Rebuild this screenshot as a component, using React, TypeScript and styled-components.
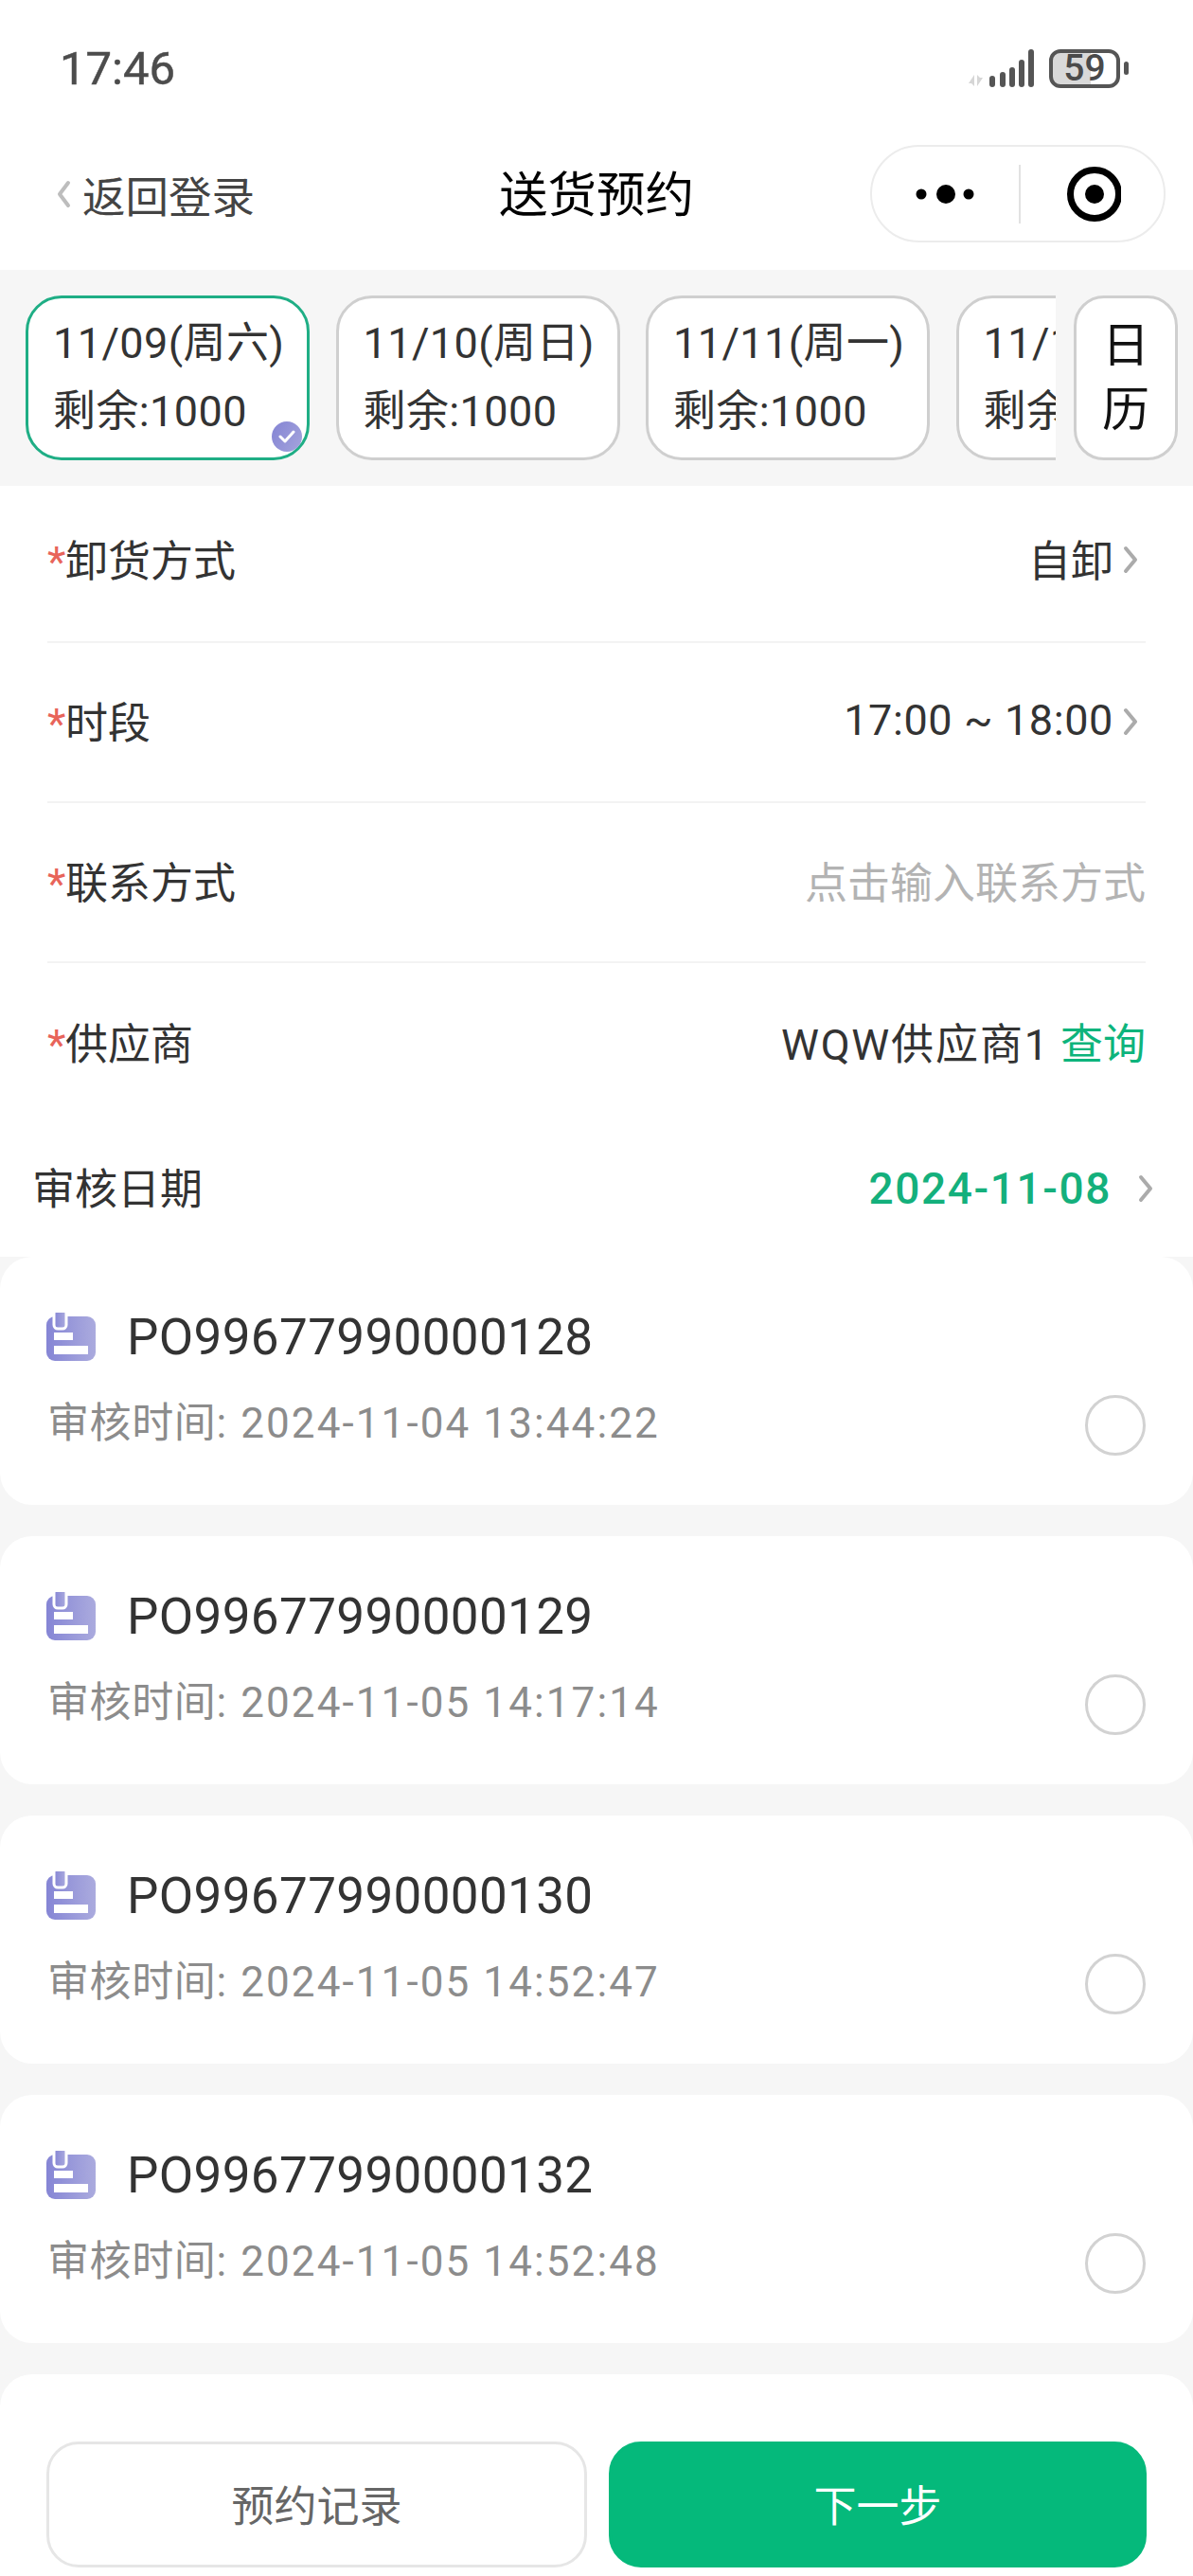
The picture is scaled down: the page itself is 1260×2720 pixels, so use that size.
import React from "react";
import styled, { createGlobalStyle } from "styled-components";

const Global = createGlobalStyle`
  html, body { margin: 0; padding: 0; background: #fff; }
  * { box-sizing: border-box; }
  body { font-family: Roboto, "Noto Sans CJK SC", sans-serif; }
`;

const Page = styled.div`
  position: relative;
  width: 1260px;
  height: 2720px;
  overflow: hidden;
  background: #f6f6f6;
  color: #333;
`;

const Header = styled.header`
  background: #fff;
  height: 285px;
  display: flex;
  flex-direction: column;
`;

const StatusBar = styled.div`
  height: 148px;
  padding: 46px 68px 0 63px;
  display: flex;
  justify-content: space-between;
  align-items: flex-start;
`;

const Clock = styled.span`
  font-size: 49px;
  line-height: 54px;
  font-weight: 400;
  color: #4c4c4c;
  -webkit-text-stroke: 0.5px #4c4c4c;
`;

const StatusIcons = styled.div`
  display: flex;
  align-items: flex-end;
  height: 46px;
  gap: 16px;
  margin-right: 9px;
`;

const Battery = styled.div`
  position: relative;
  width: 75px;
  height: 41px;
  border: 4px solid #555;
  border-radius: 12px;
  margin-bottom: -1px;
  background: linear-gradient(90deg, #d9d9d9 59%, #fff 59%);
  display: flex;
  align-items: center;
  justify-content: center;
  font-size: 39px;
  font-weight: 500;
  color: #4a4a4a;
  line-height: 33px;
  &::after {
    content: "";
    position: absolute;
    right: -13px;
    top: 9px;
    width: 5px;
    height: 14px;
    border-radius: 3px;
    background: #555;
  }
`;

const NavBar = styled.nav`
  position: relative;
  height: 137px;
  padding: 5px 29px 0 59px;
  display: flex;
  align-items: flex-start;
  justify-content: space-between;
`;

const BackLink = styled.div`
  display: flex;
  align-items: center;
  gap: 12px;
  height: 103px;
  font-size: 45.5px;
  color: #444;
`;

const NavTitle = styled.div`
  position: absolute;
  left: 0;
  right: 0;
  top: 7px;
  height: 103px;
  line-height: 103px;
  text-align: center;
  font-size: 51.5px;
  color: #000;
`;

const Capsule = styled.div`
  width: 312px;
  height: 103px;
  border: 2px solid #ececec;
  border-radius: 52px;
  background: #fff;
  display: grid;
  grid-template-columns: 155px 2px 1fr;
  align-items: center;
  justify-items: center;
  position: relative;
  z-index: 1;
`;

const CapsuleDivider = styled.span`
  width: 2px;
  height: 62px;
  background: #e2e2e2;
`;

const DateStrip = styled.section`
  height: 228px;
  padding: 27px 16px 0 27px;
  display: flex;
  align-items: flex-start;
  gap: 19px;
`;

const DateScroller = styled.div`
  flex: 1;
  display: flex;
  gap: 27.5px;
  overflow: hidden;
`;

const DateChip = styled.div<{ $active?: boolean }>`
  position: relative;
  flex: 0 0 300px;
  height: 174px;
  padding: 12px 0 0 26px;
  border: 3px solid ${(p) => (p.$active ? "#1fae85" : "#cfcfcf")};
  border-radius: 38px;
  background: #fff;
  font-size: 45px;
  line-height: 72px;
  letter-spacing: 0.4px;
  color: #333;
  white-space: nowrap;
`;

const CheckBadge = styled.span`
  position: absolute;
  right: 5px;
  bottom: 6px;
  width: 32px;
  height: 32px;
  display: flex;
  align-items: center;
  justify-content: center;
  border-radius: 50%;
  background: linear-gradient(120deg, #8484d4, #a4a4dc);
`;

const CalendarChip = styled.div`
  flex: 0 0 110px;
  height: 174px;
  border: 3px solid #cfcfcf;
  border-radius: 32px;
  background: #fff;
  display: flex;
  flex-direction: column;
  align-items: center;
  justify-content: center;
  font-size: 50px;
  line-height: 68px;
  color: #111;
`;

const Form = styled.section`
  background: #fff;
  padding: 0 50px;
`;

const FormRow = styled.div<{ $last?: boolean }>`
  height: 169px;
  padding-bottom: 5px;
  display: flex;
  align-items: center;
  justify-content: space-between;
  border-bottom: ${(p) => (p.$last ? "none" : "2px solid #f3f3f3")};
  font-size: 45px;
  &:first-child {
    height: 166px;
    padding-bottom: 12px;
  }
`;

const Label = styled.span`
  color: #333;
  display: flex;
  align-items: baseline;
`;

const Star = styled.span`
  color: #e8645a;
  width: 19px;
`;

const Value = styled.span<{ $spaced?: boolean }>`
  display: flex;
  align-items: center;
  color: #333;
  gap: 10px;
  margin-right: 8px;
  letter-spacing: ${(p) => (p.$spaced ? "0.6px" : "0")};
  svg {
    margin-top: 4px;
  }
`;

const Supplier = styled.span`
  color: #333;
  letter-spacing: 1.9px;
`;

const Placeholder = styled.span`
  color: #b3b3b3;
`;

const Link = styled.span`
  color: #0db47c;
  margin-left: 11px;
  letter-spacing: 0;
`;

const ReviewRow = styled.div`
  height: 141px;
  background: #fff;
  padding: 0 42px 8px 34px;
  display: flex;
  align-items: center;
  justify-content: space-between;
  font-size: 45px;
  color: #333;
`;

const ReviewDate = styled.span`
  display: flex;
  align-items: center;
  gap: 28px;
  margin-top: 4px;
  color: #14b07c;
  font-weight: 500;
  font-size: 46px;
  letter-spacing: 1.6px;
`;

const OrderList = styled.section`
  display: flex;
  flex-direction: column;
  gap: 33px;
`;

const OrderCard = styled.article`
  flex: 0 0 262px;
  height: 262px;
  background: #fff;
  border-radius: 34px;
  padding: 60px 50px 0 49px;
  display: grid;
  grid-template-columns: 1fr 64px;
  align-items: start;
`;

const OrderInfo = styled.div`
  display: flex;
  flex-direction: column;
`;

const OrderTitle = styled.div`
  display: flex;
  align-items: center;
  gap: 33px;
  height: 52px;
  margin-top: -1px;
  font-size: 53px;
  line-height: 52px;
  letter-spacing: 0.35px;
  color: #333;
`;

const OrderTime = styled.div`
  margin-top: 37px;
  padding-left: 1px;
  font-size: 44px;
  line-height: 56px;
  color: #8c8c8c;
  letter-spacing: 0.6px;
`;

const OrderStamp = styled.span`
  margin-left: 3px;
  letter-spacing: 2.1px;
`;

const Radio = styled.span`
  width: 64px;
  height: 64px;
  margin-top: 86px;
  border-radius: 50%;
  border: 3px solid #d2d2d2;
`;

const Footer = styled.footer`
  position: absolute;
  left: 0;
  right: 0;
  bottom: 0;
  height: 170px;
  padding: 28px 49px 9px 49px;
  background: #fff;
  display: grid;
  grid-template-columns: 571px 568px;
  gap: 23px;
`;

const FooterButton = styled.div<{ $primary?: boolean }>`
  height: 133px;
  display: flex;
  align-items: center;
  justify-content: center;
  padding-bottom: 3px;
  border-radius: 34px;
  border: 3px solid ${(p) => (p.$primary ? "#05b97b" : "#e6e6e6")};
  background: ${(p) => (p.$primary ? "#05b97b" : "#fff")};
  color: ${(p) => (p.$primary ? "#fff" : "#666")};
  font-size: 45px;
`;

const Chevron = ({ left, color = "#ababab" }: { left?: boolean; color?: string }) => (
  <svg width="16" height="30" viewBox="0 0 16 30" fill="none">
    <path
      d={left ? "M13 3 L4 15 L13 27" : "M3 3 L13 15 L3 27"}
      stroke={color}
      strokeWidth="4"
      strokeLinecap="round"
      strokeLinejoin="round"
    />
  </svg>
);

const SignalIcon = () => (
  <svg width="70" height="40" viewBox="0 0 70 40">
    <path d="M7 39V27L1 36h3zM10 27V39l6-9h-3z" fill="#d6d6d6" />
    <rect x="23" y="28" width="6" height="12" rx="3" fill="#555" />
    <rect x="34" y="24" width="6" height="16" rx="3" fill="#555" />
    <rect x="44" y="19" width="6" height="21" rx="3" fill="#555" />
    <rect x="54" y="11" width="6" height="29" rx="3" fill="#555" />
    <rect x="64" y="0" width="6" height="40" rx="3" fill="#555" />
  </svg>
);

const DotsIcon = () => (
  <svg width="64" height="24" viewBox="0 0 64 24">
    <circle cx="6" cy="12" r="5.5" fill="#000" />
    <circle cx="32" cy="12" r="10" fill="#000" />
    <circle cx="56" cy="12" r="5.5" fill="#000" />
  </svg>
);

const TargetIcon = () => (
  <svg width="60" height="60" viewBox="0 0 60 60">
    <circle cx="32" cy="30" r="25.5" fill="none" stroke="#000" strokeWidth="7" />
    <circle cx="32" cy="30" r="10" fill="#000" />
  </svg>
);

const CheckIcon = () => (
  <svg width="18" height="14" viewBox="0 0 18 14" fill="none">
    <path d="M2 7 L7 12 L16 2" stroke="#fff" strokeWidth="3" strokeLinecap="round" strokeLinejoin="round" />
  </svg>
);

const DocIcon = ({ id }: { id: string }) => (
  <svg width="52" height="52" viewBox="0 0 52 52">
    <defs>
      <linearGradient id={id} x1="0" x2="1" y1="0" y2="0">
        <stop offset="0" stopColor="#8585d5" />
        <stop offset="1" stopColor="#ababde" />
      </linearGradient>
    </defs>
    <rect x="0" y="4" width="52" height="47" rx="9" fill={`url(#${id})`} />
    <rect x="8" y="-3" width="13" height="20" rx="4" fill={`url(#${id})`} stroke="#fff" strokeWidth="3" />
    <rect x="8" y="21" width="20" height="8" fill="#fff" />
    <rect x="8" y="35" width="36" height="9" fill="#fff" />
  </svg>
);

const dates = [
  { day: "11/09(周六)", left: "剩余:1000", active: true },
  { day: "11/10(周日)", left: "剩余:1000" },
  { day: "11/11(周一)", left: "剩余:1000" },
  { day: "11/12(周二)", left: "剩余:1000" },
];

const orders = [
  { no: "PO99677990000128", time: "2024-11-04 13:44:22" },
  { no: "PO99677990000129", time: "2024-11-05 14:17:14" },
  { no: "PO99677990000130", time: "2024-11-05 14:52:47" },
  { no: "PO99677990000132", time: "2024-11-05 14:52:48" },
];

export default function App() {
  return (
    <Page>
      <Global />
      <Header>
        <StatusBar>
          <Clock>17:46</Clock>
          <StatusIcons>
            <SignalIcon />
            <Battery>59</Battery>
          </StatusIcons>
        </StatusBar>
        <NavBar>
          <BackLink>
            <Chevron left color="#bdbdbd" />
            返回登录
          </BackLink>
          <NavTitle>送货预约</NavTitle>
          <Capsule>
            <DotsIcon />
            <CapsuleDivider />
            <TargetIcon />
          </Capsule>
        </NavBar>
      </Header>

      <DateStrip>
        <DateScroller>
          {dates.map((d) => (
            <DateChip key={d.day} $active={d.active}>
              {d.day}
              <br />
              {d.left}
              {d.active && (
                <CheckBadge>
                  <CheckIcon />
                </CheckBadge>
              )}
            </DateChip>
          ))}
        </DateScroller>
        <CalendarChip>
          <span>日</span>
          <span>历</span>
        </CalendarChip>
      </DateStrip>

      <Form>
        <FormRow>
          <Label><Star>*</Star>卸货方式</Label>
          <Value>自卸<Chevron /></Value>
        </FormRow>
        <FormRow>
          <Label><Star>*</Star>时段</Label>
          <Value $spaced>17:00 ~ 18:00<Chevron /></Value>
        </FormRow>
        <FormRow>
          <Label><Star>*</Star>联系方式</Label>
          <Placeholder>点击输入联系方式</Placeholder>
        </FormRow>
        <FormRow $last>
          <Label><Star>*</Star>供应商</Label>
          <Supplier>WQW供应商1<Link>查询</Link></Supplier>
        </FormRow>
      </Form>

      <ReviewRow>
        <span>审核日期</span>
        <ReviewDate>2024-11-08<Chevron /></ReviewDate>
      </ReviewRow>

      <OrderList>
        {orders.map((o) => (
          <OrderCard key={o.no}>
            <OrderInfo>
              <OrderTitle>
                <DocIcon id={`doc-${o.no}`} />
                {o.no}
              </OrderTitle>
              <OrderTime>审核时间: <OrderStamp>{o.time}</OrderStamp></OrderTime>
            </OrderInfo>
            <Radio />
          </OrderCard>
        ))}
        <OrderCard />
      </OrderList>

      <Footer>
        <FooterButton>预约记录</FooterButton>
        <FooterButton $primary>下一步</FooterButton>
      </Footer>
    </Page>
  );
}
